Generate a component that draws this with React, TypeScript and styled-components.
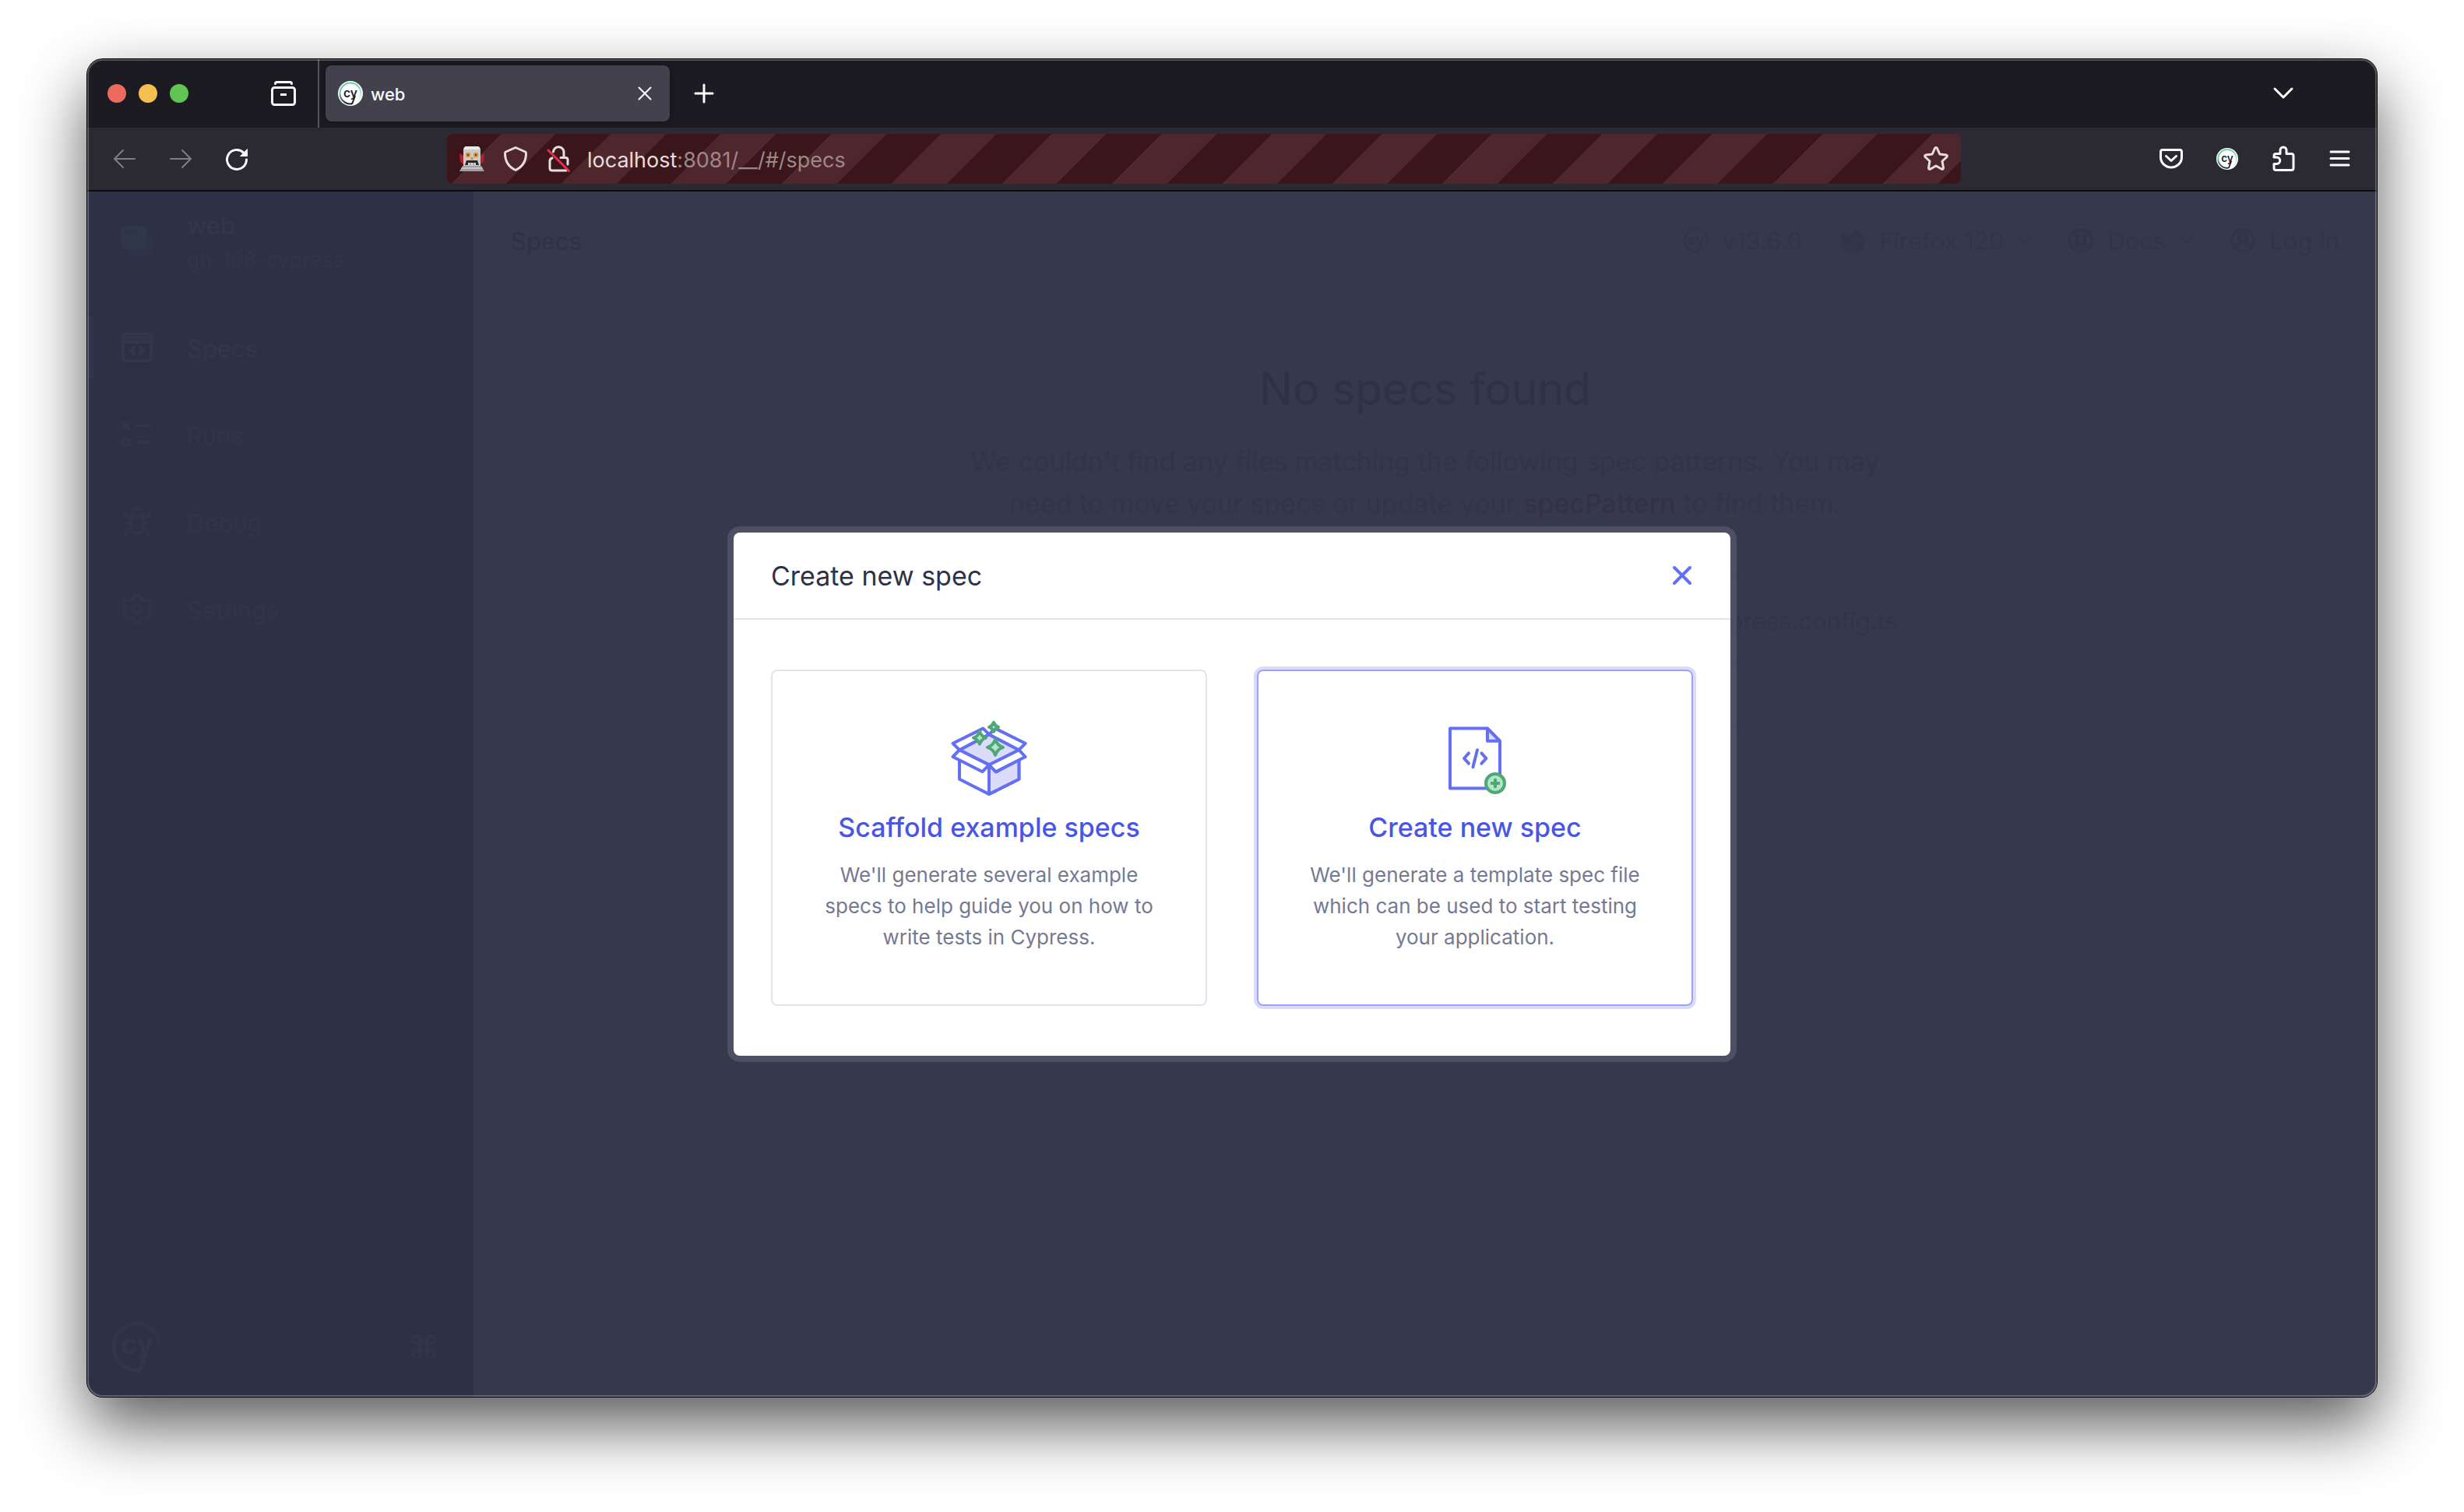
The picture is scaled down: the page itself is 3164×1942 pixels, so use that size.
import React from "react";
import styled, { createGlobalStyle } from "styled-components";

const color = {
  chromeDark: "#1c1b22",
  chrome: "#2b2a33",
  tab: "#42414d",
  chromeText: "#fbfbfe",
  chromeMuted: "#7f7e85",
  urlText: "#e6dddf",
  urlMuted: "#9c888b",
  side: "#2e3045",
  sideText: "#343649",
  sideFaint: "#323449",
  sideLine: "#303247",
  page: "#36394b",
  pageText: "#2f3146",
  pageMuted: "#323448",
  pageLine: "#35374a",
  pageLink: "#34304a",
  indigo: "#6470f3",
  indigoDeep: "#4956e3",
  indigoSoft: "#dadcfa",
  jade: "#4fa773",
  jadeSoft: "#b2e6cb",
  gray: "#747994",
  ink: "#2e3247",
  line: "#e1e3ed",
};

const GlobalStyle = createGlobalStyle`
  *, *::before, *::after { box-sizing: border-box; }
  body {
    margin: 0;
    background: #fff;
    font-family: Inter, "Liberation Sans", sans-serif;
    font-size: 31px;
  }
  button { font: inherit; color: inherit; background: none; border: 0; padding: 0; }
  a { color: inherit; text-decoration: none; }
  h1, h2, h3, p, ul { margin: 0; padding: 0; font-weight: 400; }
  svg { display: block; flex: none; overflow: visible; }
`;

const Desktop = styled.div`
  min-height: 100vh;
  padding: 76px 112px 148px;
  display: flex;
`;

const Shadow = styled.div`
  flex: 1;
  min-width: 0;
  display: flex;
  border-radius: 20px;
  box-shadow: 0 0 0 1px #000, 0 36px 84px rgba(0, 0, 0, 0.66);
`;

const Window = styled.div`
  position: relative;
  flex: 1;
  min-width: 0;
  display: flex;
  flex-direction: column;
  border-radius: 20px;
  overflow: hidden;
  background: ${color.page};
  &::after {
    content: "";
    position: absolute;
    inset: 0;
    border: 2px solid rgba(255, 255, 255, 0.24);
    border-radius: 20px;
    pointer-events: none;
  }
`;

/* ---------- browser chrome ---------- */

const TabStrip = styled.div`
  display: flex;
  align-items: center;
  height: 88px;
  background: ${color.chromeDark};
  color: ${color.chromeText};
`;

const Lights = styled.div`
  display: flex;
  gap: 16px;
  padding-left: 26px;
`;

const Light = styled.button<{ $fill: string }>`
  width: 24px;
  height: 24px;
  border-radius: 50%;
  background: ${(p) => p.$fill};
`;

const IconButton = styled.button`
  width: 32px;
  height: 32px;
  display: grid;
  place-items: center;
  flex: none;
`;

const ViewSlot = styled.div`
  align-self: stretch;
  display: flex;
  align-items: center;
  padding: 0 28px 0 106px;
  border-right: 2px solid #55545b;
`;

const Tab = styled.div`
  display: flex;
  align-items: center;
  gap: 10px;
  width: 442px;
  height: 72px;
  margin: 0 28px 0 8px;
  padding: 0 16px;
  border-radius: 8px;
  background: ${color.tab};
  box-shadow: 0 0 8px rgba(0, 0, 0, 0.4);
  font-size: 22px;
  font-weight: 500;
`;

const TabTitle = styled.span`
  flex: 1;
  padding-top: 2px;
`;

const ListTabs = styled.div`
  margin-left: auto;
  padding-right: 104px;
`;

const Toolbar = styled.div`
  display: grid;
  grid-template-columns: 462px 1fr 534px;
  align-items: center;
  height: 82px;
  background: ${color.chrome};
  border-bottom: 2px solid #0c0c0d;
  color: ${color.chromeText};
`;

const NavButtons = styled.div`
  display: flex;
  gap: 40px;
  padding-left: 32px;
  button:disabled { color: ${color.chromeMuted}; }
`;

const UrlBar = styled.div`
  display: flex;
  align-items: center;
  height: 64px;
  padding: 0 16px;
  gap: 24px;
  border-radius: 8px;
  color: ${color.urlText};
  background: repeating-linear-gradient(
    -45deg,
    #3a161b 0 21px,
    #4f262c 21px 71px,
    #3a161b 71px 100px
  );
`;

const Address = styled.div`
  flex: 1;
  margin-left: -4px;
  padding-top: 2px;
  font-size: 27px;
  color: ${color.urlMuted};
  b { font-weight: 400; color: ${color.urlText}; }
`;

const Extensions = styled.div`
  display: flex;
  justify-content: flex-end;
  gap: 40px;
  padding-right: 32px;
`;

/* ---------- app ---------- */

const Body = styled.div`
  position: relative;
  flex: 1;
  display: flex;
`;

const Sidebar = styled.aside`
  width: 496px;
  display: flex;
  flex-direction: column;
  background: ${color.side};
  color: ${color.sideFaint};
`;

const Project = styled.div`
  display: flex;
  align-items: center;
  gap: 44px;
  height: 128px;
  padding-left: 44px;
  border-bottom: 2px solid ${color.sideLine};
`;

const ProjectText = styled.div`
  padding-top: 6px;
  line-height: 44px;
`;

const ProjectName = styled.div`
  color: ${color.sideText};
`;

const Branch = styled.div`
  font-size: 27px;
`;

const Nav = styled.nav`
  flex: 1;
  display: flex;
  flex-direction: column;
  gap: 32px;
  padding-top: 32px;
`;

const NavLink = styled.a<{ $active?: boolean }>`
  display: flex;
  align-items: center;
  gap: 44px;
  height: 80px;
  padding-left: 36px;
  border-left: 8px solid ${(p) => (p.$active ? "#33354f" : "transparent")};
  border-radius: 0 8px 8px 0;
  color: ${(p) => (p.$active ? color.sideText : color.sideFaint)};
`;

const NavLabel = styled.span`
  padding-top: 2px;
`;

const SideFooter = styled.div`
  display: flex;
  align-items: center;
  justify-content: space-between;
  padding: 32px 48px 32px 32px;
`;

const Main = styled.main`
  flex: 1;
  min-width: 0;
  color: ${color.pageText};
`;

const Header = styled.header`
  display: flex;
  align-items: center;
  justify-content: space-between;
  height: 128px;
  padding: 0 48px;
  border-bottom: 2px solid ${color.pageLine};
`;

const HeaderLinks = styled.div`
  display: flex;
  gap: 49px;
  color: ${color.pageMuted};
`;

const HeaderLink = styled.button`
  display: flex;
  align-items: center;
  gap: 18px;
`;

const Empty = styled.section`
  display: flex;
  flex-direction: column;
  align-items: center;
  padding: 80px 48px;
  text-align: center;
`;

const EmptyTitle = styled.h1`
  font-size: 57px;
  line-height: 92px;
`;

const EmptyText = styled.p`
  max-width: 1240px;
  margin-top: 20px;
  font-size: 34px;
  line-height: 54px;
  color: ${color.pageMuted};
  b { font-weight: 500; color: ${color.pageLink}; }
`;

const PatternBox = styled.div`
  width: 100%;
  max-width: 1282px;
  height: 196px;
  margin-top: 64px;
  border: 2px solid ${color.pageLine};
  border-radius: 8px;
  text-align: right;
`;

const PatternHead = styled.div`
  height: 112px;
  padding: 0 32px;
  line-height: 116px;
  color: ${color.pageMuted};
  border-bottom: 2px solid ${color.pageLine};
`;

/* ---------- dialog ---------- */

const Backdrop = styled.div`
  position: absolute;
  inset: 0;
  display: grid;
  place-items: center;
`;

const Dialog = styled.div`
  width: 100%;
  max-width: 1280px;
  border-radius: 8px;
  background: #fff;
  box-shadow: 0 0 0 8px #4d4f63;
`;

const DialogHead = styled.div`
  display: flex;
  align-items: center;
  justify-content: space-between;
  height: 112px;
  padding: 0 46px 0 48px;
  border-bottom: 2px solid ${color.line};
`;

const DialogTitle = styled.h2`
  padding-top: 2px;
  font-size: 34px;
  line-height: 48px;
  color: ${color.ink};
`;

const Cards = styled.div`
  display: grid;
  grid-template-columns: 1fr 1fr;
  gap: 64px;
  padding: 64px 48px;
`;

const Card = styled.button<{ $focused?: boolean }>`
  display: flex;
  flex-direction: column;
  align-items: center;
  padding: 62px 60px 66px;
  border: 2px solid ${(p) => (p.$focused ? "#9aa2fc" : color.line)};
  border-radius: 8px;
  box-shadow: ${(p) => (p.$focused ? `0 0 0 4px ${color.indigoSoft}` : "none")};
`;

const CardTitle = styled.span`
  margin-top: 17px;
  font-size: 34px;
  line-height: 52px;
  font-weight: 500;
  color: ${color.indigoDeep};
`;

const CardText = styled.span`
  max-width: 440px;
  margin-top: 15px;
  font-size: 26px;
  line-height: 40px;
  color: ${color.gray};
`;

/* ---------- icons ---------- */

type StrokeProps = { size?: number; width?: number; box?: number; children: React.ReactNode };

const Stroke = ({ size = 32, width = 2, box = 32, children }: StrokeProps) => (
  <svg
    width={size}
    height={size}
    viewBox={`0 0 ${box} ${box}`}
    fill="none"
    stroke="currentColor"
    strokeWidth={width}
    strokeLinecap="round"
    strokeLinejoin="round"
    aria-hidden="true"
  >
    {children}
  </svg>
);

type LogoProps = {
  id: string;
  size: number;
  disc?: string;
  ink: string;
  low: string;
  high: string;
  fade: string;
};

const CyLogo = ({ id, size, disc, ink, low, high, fade }: LogoProps) => {
  const r = disc ? 27 : 30;
  const w = disc ? 4 : 5;
  return (
    <svg width={size} height={size} viewBox="0 0 64 64" aria-hidden="true">
      <defs>
        <linearGradient id={`${id}Left`} x1="0" y1="1" x2="0" y2="0">
          <stop offset="0" stopColor={low} />
          <stop offset="0.55" stopColor={high} />
          <stop offset="1" stopColor={high} />
        </linearGradient>
        <linearGradient id={`${id}Right`} x1="0" y1="0" x2="0" y2="1">
          <stop offset="0" stopColor={high} />
          <stop offset="1" stopColor={fade} />
        </linearGradient>
      </defs>
      {disc && <circle cx="32" cy="32" r="32" fill={disc} />}
      <path
        d={`M32 ${32 - r}A${r} ${r} 0 0 1 ${32 + r * 0.7} ${32 + r * 0.7}`}
        fill="none"
        stroke={`url(#${id}Right)`}
        strokeWidth={w}
      />
      <path
        d={`M32 ${32 + r}A${r} ${r} 0 0 1 32 ${32 - r}`}
        fill="none"
        stroke={`url(#${id}Left)`}
        strokeWidth={w}
      />
      <path
        d={`M44 38L37 ${30 + r}Q36 ${32 + r} 32 ${32 + r}`}
        fill="none"
        stroke={ink}
        strokeWidth={w}
      />
      <text
        x="32"
        y="41"
        textAnchor="middle"
        fontFamily="Inter, sans-serif"
        fontWeight={disc ? 600 : 700}
        fontSize={disc ? 31 : 36}
        fill={ink}
      >
        cy
      </text>
    </svg>
  );
};

const Robot = () => (
  <svg width="32" height="32" viewBox="0 0 32 32" aria-hidden="true">
    <path d="M0 9l5 3v11l-4-3zM32 9l-5 3v11l4-3z" fill="#b5202c" />
    <path d="M8 0h16q3 1 3 5v20H5V5q0-4 3-5z" fill="#c9cbca" />
    <path d="M8 0h16q2 1 2.500 4h-21Q6 1 8 0z" fill="#e9eae9" />
    <path d="M4 25h24l4 7H0z" fill="#9da0a0" />
    <path d="M3 27h26l1 2H2z" fill="#c4c6c6" />
    <circle cx="11" cy="11" r="3.200" fill="#d99036" />
    <circle cx="21" cy="11" r="3.200" fill="#d99036" />
    <circle cx="11" cy="11" r="1.200" fill="#6b3b12" />
    <circle cx="21" cy="11" r="1.200" fill="#6b3b12" />
    <path d="M15 14h2l1 3h-4z" fill="#d98a3c" />
    <path d="M9 18h14l2 6H7z" fill="#2c2525" />
    <path d="M11 21h10v3H11z" fill="#d8d8d6" />
    <path d="M14 21v3M18 21v3" stroke="#77706c" />
  </svg>
);

const Star4 = ({ x, y, r }: { x: number; y: number; r: number }) => {
  const k = r * 0.25;
  return (
    <path
      d={`M${x} ${y - r}Q${x + k} ${y - k} ${x + r} ${y}Q${x + k} ${y + k} ${x} ${y + r}Q${x - k} ${y + k} ${x - r} ${y}Q${x - k} ${y - k} ${x} ${y - r}Z`}
      fill={color.jadeSoft}
      stroke={color.jade}
      strokeWidth="2"
      strokeLinejoin="round"
    />
  );
};

const BoxIcon = () => (
  <svg width="96" height="96" viewBox="0 0 48 48" aria-hidden="true">
    <g stroke={color.indigo} strokeWidth="2" strokeLinejoin="round" fill="none">
      <path d="M24 9.600L43.200 19.600L24 29.200L5 19.600Z" fill={color.indigoSoft} />
      <path d="M5 26V38.400L24 48L43.200 38.400V26" />
      <path d="M24 29.200V48L43.200 38.400V26L28.500 33.700Z" fill={color.indigoSoft} />
      <path d="M5 19.600L0.800 15.400L20.200 5.800L24 9.600Z" fill="#fff" />
      <path d="M43.200 19.600L47.300 15.400L28 5.800L24 9.600Z" fill="#fff" />
      <path d="M5 19.600L0.800 24L19.800 33.600L24 29.200Z" fill="#fff" />
      <path d="M43.200 19.600L47.300 24L28.300 33.600L24 29.200Z" fill="#fff" />
    </g>
    <Star4 x={27} y={4.9} r={3} />
    <Star4 x={18} y={11.8} r={4} />
    <Star4 x={28} y={17.9} r={5} />
  </svg>
);

const FileIcon = () => (
  <svg width="96" height="96" viewBox="0 0 48 48" aria-hidden="true">
    <g stroke={color.indigo} strokeWidth="2" strokeLinejoin="round" strokeLinecap="round" fill="none">
      <path d="M8 5.800H32L40 13.900V44.200H8Z" fill="#fff" />
      <path d="M32 5.800V13.900H40Z" fill={color.indigoSoft} />
      <path d="M20 21.700L17 25L20 28.300M28.200 21.700L31.200 25L28.200 28.300M25.500 19.600L22.700 30.600" />
    </g>
    <circle cx="37" cy="41" r="6" fill={color.jadeSoft} stroke={color.jade} strokeWidth="2" />
    <path d="M37 38.800v4.400M34.800 41h4.400" stroke={color.jade} strokeWidth="2" strokeLinecap="round" />
  </svg>
);

const Chevron = () => (
  <svg width="16" height="10" viewBox="0 0 16 10" fill="none" stroke="currentColor" strokeWidth="2" aria-hidden="true">
    <path d="M1 1l7 7 7-7" />
  </svg>
);

const navItems = [
  {
    label: "Specs",
    active: true,
    icon: (
      <>
        <rect x="2" y="3" width="36" height="34" rx="4" />
        <path d="M2 13h36M2 8h36M16 20l-4 4 4 4M24 20l4 4-4 4" />
      </>
    ),
  },
  {
    label: "Runs",
    icon: (
      <>
        <path d="M2 5l8 8M10 5l-8 8M18 9h20M18 30h20" />
        <rect x="2" y="26" width="8" height="8" />
      </>
    ),
  },
  {
    label: "Debug",
    icon: (
      <>
        <path d="M14 14V9a6 6 0 0 1 12 0v5M12 14h16v14a8 8 0 0 1-16 0z" />
        <path d="M12 15q-8 0-8-9M28 15q8 0 8-9M12 22H5M28 22h7M12 28q-7 2-7 10M28 28q7 2 7 10" />
      </>
    ),
  },
  {
    label: "Settings",
    icon: (
      <>
        <path d="M17 2h6l2 5 5 2 5-1 3 6-3 4v4l3 4-3 6-5-1-5 2-2 5h-6l-2-5-5-2-5 1-3-6 3-4v-4l-3-4 3-6 5 1 5-2z" />
        <circle cx="20" cy="20" r="5" />
      </>
    ),
  },
];

/* ---------- sections ---------- */

const BrowserChrome = () => (
  <>
    <TabStrip>
      <Lights>
        <Light $fill="#ec6a5e" aria-label="Close window" />
        <Light $fill="#f4bf4f" aria-label="Minimize window" />
        <Light $fill="#61c554" aria-label="Zoom window" />
      </Lights>
      <ViewSlot>
        <IconButton aria-label="Firefox View">
          <Stroke width={3}>
            <path d="M5.500 3.500q0-2 2-2h17q2 0 2 2" />
            <rect x="1.500" y="8.500" width="29" height="22" rx="3" />
            <path d="M12 17.500h8" strokeLinecap="butt" />
          </Stroke>
        </IconButton>
      </ViewSlot>
      <Tab>
        <CyLogo id="tabLogo" size={32} disc="#fff" ink="#1b1e2e" low="#1b2a3a" high="#69c9a0" fade="#f0faf5" />
        <TabTitle>web</TabTitle>
        <IconButton aria-label="Close tab">
          <Stroke>
            <path d="M8.500 8.500l15 15M23.500 8.500l-15 15" />
          </Stroke>
        </IconButton>
      </Tab>
      <IconButton aria-label="New tab">
        <Stroke width={3}>
          <path d="M16 5v22M5 16h22" />
        </Stroke>
      </IconButton>
      <ListTabs>
        <IconButton aria-label="List all tabs">
          <Stroke width={3}>
            <path d="M5 10l11 11 11-11" />
          </Stroke>
        </IconButton>
      </ListTabs>
    </TabStrip>
    <Toolbar>
      <NavButtons>
        <IconButton aria-label="Back" disabled>
          <Stroke width={2}>
            <path d="M29 16H3M14 5L3 16l11 11" />
          </Stroke>
        </IconButton>
        <IconButton aria-label="Forward" disabled>
          <Stroke width={2}>
            <path d="M3 16h26M18 5l11 11-11 11" />
          </Stroke>
        </IconButton>
        <IconButton aria-label="Reload">
          <Stroke width={3}>
            <path d="M28.500 17A12.500 12.500 0 1 1 24.500 7.800" />
            <path d="M29.500 4v8.500H21z" fill="currentColor" strokeWidth="1" />
          </Stroke>
        </IconButton>
      </NavButtons>
      <UrlBar>
        <Robot />
        <Stroke width={3}>
          <path d="M16 1.500l12.500 5.500q1 .5 1 2c0 10-5 17.500-13.500 21.500C7.500 26.500 2.500 19 2.500 9q0-1.500 1-2z" />
        </Stroke>
        <Stroke width={3}>
          <path d="M8.500 7a6.500 6.500 0 0 1 13.500 1v6M18 14.500h6q3 0 3 2.500v6M7 15q-3 1-3 4v9q0 3 3 3h18" />
          <path d="M2 5l26.500 26.500" stroke="#ec2b4b" />
        </Stroke>
        <Address>
          <b>localhost</b>:8081/__/#/specs
        </Address>
        <IconButton aria-label="Bookmark this page">
          <Stroke width={3}>
            <path d="M16 1.500q1 0 1.500 1l3.300 7.500 8.200 1q2 .5 1 2.500l-6 5.500 1.500 8.500q0 2.500-2.500 1.500L16 25l-7 4q-2.500 1-2.500-1.500L8 19l-6-5.500q-1-2 1-2.500l8.200-1 3.300-7.500q.5-1 1.500-1z" />
          </Stroke>
        </IconButton>
      </UrlBar>
      <Extensions>
        <IconButton aria-label="Save to Pocket">
          <Stroke width={3}>
            <path d="M5 4.500h22q2.500 0 2.500 2.500v7a13.500 13 0 0 1-27 0V7q0-2.500 2.500-2.500z" />
            <path d="M9.500 12.500l6.500 6 6.500-6" />
          </Stroke>
        </IconButton>
        <IconButton aria-label="Cypress">
          <CyLogo id="extLogo" size={28} disc="#fff" ink="#1b1e2e" low="#1b2a3a" high="#69c9a0" fade="#f0faf5" />
        </IconButton>
        <IconButton aria-label="Extensions">
          <Stroke width={3}>
            <path d="M4 28V22.500h3.500a4 4 0 0 0 0-8.500H4v-2q0-2.500 2.500-2.500H12V5a4 4 0 0 1 8 0v4.500h6q3 0 3 2.500v16q0 2.500-2.500 2.500h-20Q4 30.500 4 28z" />
          </Stroke>
        </IconButton>
        <IconButton aria-label="Open application menu">
          <Stroke width={3}>
            <path d="M5 7h23M5 15.500h23M5 24h23" />
          </Stroke>
        </IconButton>
      </Extensions>
    </Toolbar>
  </>
);

const AppSidebar = () => (
  <Sidebar>
    <Project>
      <svg width="40" height="40" viewBox="0 0 40 40" aria-hidden="true">
        <rect x="8" y="10" width="32" height="29" rx="5" fill="#2d3349" />
        <rect x="0" y="2" width="32" height="29" rx="5" fill="#2f384b" />
        <path d="M5 8h4M11 8h4M17 8h4" stroke="#2d3147" strokeWidth="3" />
      </svg>
      <ProjectText>
        <ProjectName>web</ProjectName>
        <Branch>gh-168-cypress</Branch>
      </ProjectText>
    </Project>
    <Nav>
      {navItems.map((item) => (
        <NavLink key={item.label} href="#" $active={item.active}>
          <Stroke size={40} box={40} width={4}>
            {item.icon}
          </Stroke>
          <NavLabel>{item.label}</NavLabel>
        </NavLink>
      ))}
    </Nav>
    <SideFooter>
      <CyLogo id="sideLogo" size={64} ink="#33364a" low="#33364a" high="#303649" fade={color.side} />
      <Stroke size={32} box={32} width={4}>
        <path d="M11 11H6.500a4.500 4.500 0 1 1 4.500-4.500v19a4.500 4.500 0 1 1-4.500-4.500h19a4.500 4.500 0 1 1-4.500 4.500v-19a4.500 4.500 0 1 1 4.500 4.500z" />
      </Stroke>
    </SideFooter>
  </Sidebar>
);

const SpecsPage = () => (
  <Main>
    <Header>
      <span>Specs</span>
      <HeaderLinks>
        <HeaderLink>
          <CyLogo
            id="verLogo"
            size={32}
            ink={color.pageMuted}
            low={color.pageMuted}
            high={color.pageMuted}
            fade={color.pageMuted}
          />
          v13.6.0
        </HeaderLink>
        <HeaderLink>
          <svg width="32" height="32" viewBox="0 0 32 32" aria-hidden="true">
            <path
              d="M4 5l2 4q2-3 6-2l6 1Q18 3 21 0q1 4 5 6 5 4 5 11 0 14-15 14Q1 31 1 17 1 9 4 5z"
              fill={color.pageMuted}
            />
            <path d="M13 13q5-3 8 2 2 5-3 7-5 1-7-3" fill="none" stroke={color.page} strokeWidth="1" />
          </svg>
          Firefox 120
          <Chevron />
        </HeaderLink>
        <HeaderLink>
          <Stroke width={4}>
            <circle cx="16" cy="16" r="14" />
            <circle cx="16" cy="16" r="6" />
            <path d="M6 6l6 6M26 6l-6 6M6 26l6-6M26 26l-6-6" />
          </Stroke>
          Docs
          <Chevron />
        </HeaderLink>
        <HeaderLink>
          <Stroke width={4}>
            <circle cx="16" cy="16" r="14" />
            <circle cx="16" cy="12" r="5" />
            <path d="M8 26q0-8 8-8t8 8" />
          </Stroke>
          Log in
        </HeaderLink>
      </HeaderLinks>
    </Header>
    <Empty>
      <EmptyTitle>No specs found</EmptyTitle>
      <EmptyText>
        We couldn't find any files matching the following spec patterns. You may need to move your specs or
        update your <b>specPattern</b> to find them.
      </EmptyText>
      <PatternBox>
        <PatternHead>cypress.config.ts</PatternHead>
      </PatternBox>
    </Empty>
  </Main>
);

const CreateSpecDialog = () => (
  <Backdrop>
    <Dialog role="dialog" aria-labelledby="dialog-title">
      <DialogHead>
        <DialogTitle id="dialog-title">Create new spec</DialogTitle>
        <IconButton aria-label="Close">
          <svg width="32" height="32" viewBox="0 0 32 32" aria-hidden="true">
            <path d="M6 6l20 20M26 6L6 26" stroke={color.indigo} strokeWidth="4" strokeLinecap="round" />
          </svg>
        </IconButton>
      </DialogHead>
      <Cards>
        <Card>
          <BoxIcon />
          <CardTitle>Scaffold example specs</CardTitle>
          <CardText>We'll generate several example specs to help guide you on how to write tests in Cypress.</CardText>
        </Card>
        <Card $focused>
          <FileIcon />
          <CardTitle>Create new spec</CardTitle>
          <CardText>We'll generate a template spec file which can be used to start testing your application.</CardText>
        </Card>
      </Cards>
    </Dialog>
  </Backdrop>
);

export default function App() {
  return (
    <>
      <GlobalStyle />
      <Desktop>
        <Shadow>
          <Window>
            <BrowserChrome />
            <Body>
              <AppSidebar />
              <SpecsPage />
              <CreateSpecDialog />
            </Body>
          </Window>
        </Shadow>
      </Desktop>
    </>
  );
}
